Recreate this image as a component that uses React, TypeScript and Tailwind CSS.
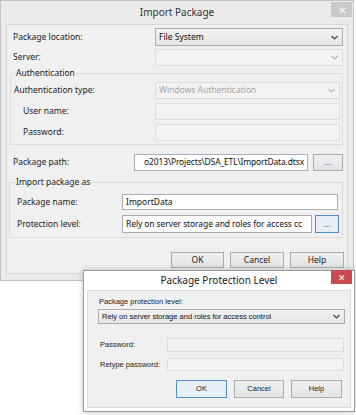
import React from "react";

const ui = { fontFamily: '"Noto Sans", "Open Sans", sans-serif' };
const ms = { fontFamily: '"Liberation Sans", Arial, sans-serif' };

function Chevron({ color = "#444" }: { color?: string }) {
  return (
    <svg width="7" height="5" viewBox="0 0 7 5" className="shrink-0">
      <polyline points="0.5,1 3.5,4 6.5,1" fill="none" stroke={color} strokeWidth="1.2" />
    </svg>
  );
}

function Select({ text, disabled, className }: { text?: string; disabled?: boolean; className: string }) {
  return (
    <div
      className={
        "flex items-center justify-between pl-[3px] pr-[4px] border " +
        (disabled
          ? "border-[#dcdcdc] bg-[#f3f3f3] text-[#a5a5a5] "
          : "border-[#acacac] bg-gradient-to-b from-[#f2f2f2] to-[#e5e5e5] text-[#111] ") +
        className
      }
    >
      <span className="truncate">{text}</span>
      <Chevron color={disabled ? "#b5b5b5" : "#444"} />
    </div>
  );
}

function Input({ text, disabled, className }: { text?: string; disabled?: boolean; className: string }) {
  return (
    <div
      className={
        "flex items-center overflow-hidden whitespace-nowrap px-[3px] border " +
        (disabled ? "border-[#dedede] bg-[#f3f3f3] " : "border-[#abadb3] bg-white text-[#111] ") +
        className
      }
    >
      {text}
    </div>
  );
}

function Btn({ label, focus, className }: { label: string; focus?: boolean; className: string }) {
  return (
    <div
      className={
        "flex items-center justify-center border " +
        (focus ? "border-[#4f8fcf] bg-[#e6eef7] " : "border-[#adadad] bg-gradient-to-b from-[#f0f0f0] to-[#e3e3e3] ") +
        className
      }
    >
      {label}
    </div>
  );
}

function ImportPackage() {
  return (
    <div className="w-[354px] h-[281px] border border-[#c4c4c4] bg-[#ebebeb] flex flex-col" style={ui}>
      {/* Title bar */}
      <div className="relative h-[23px] flex items-center justify-center text-[10px] text-[#333]">
        Import Package
        <div className="absolute top-[1px] right-[1px] w-[21px] h-[15px] bg-[#c9c9c9] flex items-center justify-center text-white text-[10px] leading-none">
          ✕
        </div>
      </div>

      {/* Client area */}
      <div className="mx-[5px] h-[250px] border border-[#d7d7d7] bg-[#f0f0f0] text-[8.5px] text-[#222] flex flex-col">
        <div className="mt-[3px] h-[18px] flex items-center">
          <div className="w-[148px] pl-[6px]">Package location:</div>
          <Select text="File System" className="w-[188px] h-[18px]" />
        </div>
        <div className="mt-[3px] h-[17px] flex items-center">
          <div className="w-[148px] pl-[6px]">Server:</div>
          <Select disabled className="w-[188px] h-[17px]" />
        </div>

        <fieldset className="mt-[1px] ml-[3px] w-[333px] border border-[#dcdcdc] px-0 pb-[3px]">
          <legend className="ml-[4px] px-[1px] leading-[12px]">Authentication</legend>
          <div className="mt-[3px] h-[17px] flex items-center">
            <div className="w-[144px] pl-[3px]">Authentication type:</div>
            <Select disabled text="Windows Authentication" className="w-[185px] h-[17px]" />
          </div>
          <div className="mt-[4px] h-[17px] flex items-center">
            <div className="w-[144px] pl-[12px]">User name:</div>
            <Input disabled className="w-[185px] h-[17px]" />
          </div>
          <div className="mt-[4px] h-[17px] flex items-center">
            <div className="w-[144px] pl-[12px]">Password:</div>
            <Input disabled className="w-[185px] h-[17px]" />
          </div>
        </fieldset>

        <div className="mt-[9px] h-[17px] flex items-center">
          <div className="w-[127px] pl-[6px]">Package path:</div>
          <Input
            text="o2013\Projects\DSA_ETL\ImportData.dtsx"
            className="w-[174px] h-[17px] justify-end tracking-[-0.15px]"
          />
          <Btn label="..." className="ml-[5px] w-[30px] h-[17px] text-[#555]" />
        </div>

        <fieldset className="mt-[5px] ml-[2px] w-[334px] border border-[#dcdcdc] px-0 pb-[4px]">
          <legend className="ml-[5px] px-[1px] leading-[12px]">Import package as</legend>
          <div className="mt-[6px] h-[16px] flex items-center">
            <div className="w-[112px] pl-[7px]">Package name:</div>
            <Input text="ImportData" className="w-[216px] h-[16px]" />
          </div>
          <div className="mt-[5px] h-[18px] flex items-center">
            <div className="w-[112px] pl-[7px]">Protection level:</div>
            <Input
              text="Rely on server storage and roles for access cc"
              className="w-[190px] h-[18px] tracking-[-0.1px]"
            />
            <Btn label="..." focus className="ml-[3px] w-[24px] h-[18px] text-[#555]" />
          </div>
        </fieldset>

        <div className="mt-[14px] flex justify-end gap-[6px] pr-[3px]">
          <Btn label="OK" className="w-[53px] h-[16px]" />
          <Btn label="Cancel" className="w-[54px] h-[16px]" />
          <Btn label="Help" className="w-[54px] h-[16px]" />
        </div>
      </div>
    </div>
  );
}

function ProtectionLevel() {
  return (
    <div className="absolute left-[83px] top-[270px] w-[272px] h-[142px] border border-[#9c9c9c] bg-white shadow-[0_0_6px_rgba(0,0,0,0.25)] flex flex-col">
      <div className="relative h-[19px] flex items-center justify-center text-[10px] text-[#222]" style={ui}>
        Package Protection Level
        <div className="absolute -top-[1px] right-[2px] w-[21px] h-[14px] bg-[#c74b50] flex items-center justify-center text-white text-[9px] leading-none">
          ✕
        </div>
      </div>
      <div className="mx-[3px] flex-1 mb-[3px] border border-[#dadada] bg-[#f0f0f0] text-[7.5px] text-[#222] flex flex-col" style={ms}>
        <div className="mt-[6px] pl-[11px] h-[10px] leading-[10px]">Package protection level:</div>
        <div className="mt-[2px] pl-[10px]">
          <Select text="Rely on server storage and roles for access control" className="w-[247px] h-[15px]" />
        </div>
        <div className="mt-[14px] h-[14px] flex items-center">
          <div className="w-[79px] pl-[12px]">Password:</div>
          <Input disabled className="w-[177px] h-[14px]" />
        </div>
        <div className="mt-[6px] h-[13px] flex items-center">
          <div className="w-[79px] pl-[12px]">Retype password:</div>
          <Input disabled className="w-[177px] h-[13px]" />
        </div>
        <div className="mt-[9px] flex justify-end gap-[7px] pr-[8px]">
          <Btn label="OK" focus className="w-[51px] h-[18px]" />
          <Btn label="Cancel" className="w-[50px] h-[18px]" />
          <Btn label="Help" className="w-[51px] h-[18px]" />
        </div>
      </div>
    </div>
  );
}

export default function App() {
  return (
    <div className="relative w-[356px] h-[415px] bg-white overflow-hidden">
      <ImportPackage />
      <ProtectionLevel />
    </div>
  );
}
